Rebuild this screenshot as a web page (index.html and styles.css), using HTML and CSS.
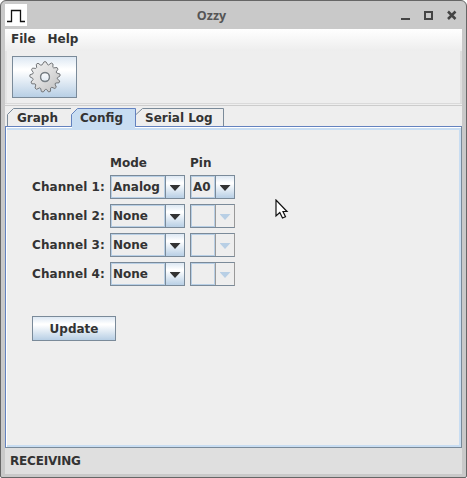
FILE: index.html
```html
<!DOCTYPE html>
<html lang="en">
<head>
<meta charset="utf-8">
<title>Ozzy</title>
<link rel="stylesheet" href="styles.css">
</head>
<body>
<div class="window">
  <header class="titlebar">
    <svg class="app-icon" width="22" height="22" viewBox="0 0 22 22"><path fill="#fff" d="M0 0h22v22H0z"/><path d="M2 17.500h4.500v-11h9v11H20" fill="none" stroke="#111" stroke-width="1.300"/></svg>
    <span class="title">Ozzy</span>
    <svg class="controls" width="56" height="12" viewBox="0 0 56 12"><path d="M0 9h9v2H0z" fill="#444"/><path d="M24 3h7v7h-7z" fill="none" stroke="#444" stroke-width="2"/><path d="M47 2.500l7.500 7.500M54.500 2.500L47 10" stroke="#444" stroke-width="2.500"/></svg>
  </header>
  <nav class="menu"><span>File</span><span>Help</span></nav>
  <div class="toolbar">
    <button class="metal gear-button" aria-label="Settings">
      <svg width="34" height="34" viewBox="-17 -17 34 34">
        <defs><linearGradient id="g" x1="0" y1="0" x2="1" y2="1"><stop offset="0" stop-color="#f0f0f0"/><stop offset=".5" stop-color="#dedede"/><stop offset="1" stop-color="#bdbdbd"/></linearGradient></defs>
        <path fill="url(#g)" stroke="#74777a" fill-rule="evenodd" stroke-linejoin="round" d="M-2.800-12.200L-1-15.200H1L2.800-12.200L3.500-12L6.300-14L8-13L7.900-9.700L8.600-9.100L12-9.500L13-7.800L11.100-5L11.700-4L15-2.900V-1L12.400.7L12.200 1.800L14.800 4L14 5.800L10.700 6L10 7L11.300 10.200L9.900 11.500L6.800 10.300L5.600 11L5.500 14.300L3.600 15L1.500 12.400H.4L-1.700 15L-3.600 14.600L-4.300 11.500L-5.400 10.900L-8.500 12.300L-10 11L-9.200 7.900L-9.900 6.900L-13.200 6.800L-14 5L-11.900 2.500L-12.200 1.400L-15.100-.2V-2.200L-12-3.300L-11.700-4.400L-13.500-7.200L-12.500-8.900L-9.200-8.600L-8.400-9.400L-8.700-12.700L-7-13.800L-4.200-11.800ZM4.500 0A4.500 4.500 0 1 0-4.500 0A4.500 4.500 0 1 0 4.500 0Z"/>
        <circle r="4.500" fill="none" stroke="#788086" stroke-width="1.300"/>
      </svg>
    </button>
  </div>
  <div class="tabs">
    <div class="tab tab-graph"><svg width="64" height="18"><path d="M.5 19V6.500L6.500.5H65"/></svg><span>Graph</span></div>
    <div class="tab tab-config"><svg width="65" height="20"><path d="M.5 18.500V6.500L6.500.5H64.500V18.500"/><path class="join" d="M1 18h63v2H1z"/></svg><span>Config</span></div>
    <div class="tab tab-log"><svg width="88" height="18"><path d="M0 6.500L6.500.5H87.500V19"/></svg><span>Serial Log</span></div>
  </div>
  <main class="panel">
    <div class="form">
      <span></span><span class="head">Mode</span><span class="head">Pin</span>
      <label>Channel 1:</label>
      <div class="combo mode"><span>Analog</span><i></i></div>
      <div class="combo pin"><span>A0</span><i></i></div>
      <label>Channel 2:</label>
      <div class="combo mode"><span>None</span><i></i></div>
      <div class="combo pin disabled"><span></span><i></i></div>
      <label>Channel 3:</label>
      <div class="combo mode"><span>None</span><i></i></div>
      <div class="combo pin disabled"><span></span><i></i></div>
      <label>Channel 4:</label>
      <div class="combo mode"><span>None</span><i></i></div>
      <div class="combo pin disabled"><span></span><i></i></div>
    </div>
    <button class="metal update">Update</button>
  </main>
  <footer class="status">RECEIVING</footer>
</div>
<svg class="cursor" width="15" height="22" viewBox="0 0 15 22"><path d="M1 1V17L4.800 13.500L7.500 19L10.500 17.700L8 12.500H12Z" fill="#fff" stroke="#111" stroke-width="1.200"/></svg>
</body>
</html>
```
FILE: styles.css
```css
* { box-sizing: border-box; }
body {
  margin: 0;
  background: #fff;
  font: bold 12px/14px "DejaVu Sans", sans-serif;
  color: #333;
  overflow: hidden;
}
.window {
  width: 467px;
  height: 478px;
  border: 1px solid #666;
  border-radius: 6px 6px 2px 2px;
  background: #c9c9c9;
  padding: 0 4px 3px;
  display: flex;
  flex-direction: column;
}
.titlebar {
  height: 28px;
  flex: none;
  display: flex;
  justify-content: space-between;
  padding: 3px 5px 0 0;
}
.title {
  font: bold 12.5px/24px "Open Sans", sans-serif;
  color: #555;
  margin-left: -5px;
}
.controls { margin-top: 5px; }
.menu {
  height: 22px;
  flex: none;
  width: 457px;
  background: linear-gradient(#fff, #ededed);
  display: flex;
  gap: 12px;
  padding: 3px 6px;
}
.toolbar {
  height: 55px;
  flex: none;
  border-bottom: 1px solid #ccc;
  background: #eee;
  padding: 5px 7px;
  box-shadow: inset 0 -1px #eee, inset 0 -2px #dadada, inset 2px 0 #e5e5e5, inset -2px 0 #dedede;
}
.metal {
  display: flex;
  align-items: center;
  justify-content: center;
  padding: 0;
  border: 1px solid #7a8a99;
  background: linear-gradient(#dde8f3, #fff 30%, #fff 34%, #b8cfe5);
  font: inherit;
  color: #333;
}
.gear-button { width: 65px; height: 42px; }
.tabs {
  height: 20px;
  flex: none;
  background: #eee;
  padding: 2px 0 0 2px;
  display: flex;
}
.tab { position: relative; height: 18px; padding-top: 3px; white-space: nowrap; }
.tab svg { position: absolute; left: 0; top: 0; fill: #eee; stroke: #7a8a99; }
.tab span { position: relative; }
.tab-graph { width: 64px; padding-left: 10px; }
.tab-config { width: 65px; padding-left: 9px; z-index: 1; }
.tab-config svg { fill: #c8ddf2; stroke: #6382bf; }
.tab-config .join { stroke: none; }
.tab-log { width: 88px; padding-left: 9px; }
.panel {
  height: 322px;
  flex: none;
  border: 1px solid #6382bf;
  border-bottom-color: #7a8a99;
  border-right-color: #7a8a99;
  background: #eee;
  box-shadow: inset 1px 1px #fff, inset 0 3px #c8ddf2, inset -2px -2px #c8ddf2;
  padding: 29px 26px 0;
}
.form {
  display: grid;
  grid-template-columns: 73px 75px 45px;
  grid-template-rows: 14px repeat(4, 24px);
  column-gap: 5px;
  row-gap: 5px;
}
label { padding-top: 5px; white-space: nowrap; letter-spacing: 0.08px; }
.combo {
  border: 1px solid #7a8a99;
  display: flex;
  height: 24px;
}
.combo span {
  flex: 1;
  border: 1px solid #b8cfe5;
  padding: 3px 0 0 1px;
}
.combo i {
  width: 19px;
  border-left: 1px solid #7a8a99;
  background: linear-gradient(#dde8f3, #fff 30%, #fff 34%, #b8cfe5);
}
.combo i::after {
  content: "";
  display: block;
  width: 11px;
  height: 6px;
  margin: 9px 0 0 3.5px;
  background: #333;
  clip-path: polygon(0 0, 100% 0, 50% 100%);
}
.disabled { border-color: #7a8a99 #999 #7a8a99 #7a8a99; }
.disabled i { background: #eee; border-color: #999; }
.disabled i::after { background: #b8cfe5; }
.update { width: 84px; height: 25px; margin-top: 30px; }
.status {
  flex: 1;
  background: #dfdfdf;
  padding: 6px 5px;
  letter-spacing: -0.2px;
}
.cursor { position: absolute; left: 275px; top: 199px; }
```
